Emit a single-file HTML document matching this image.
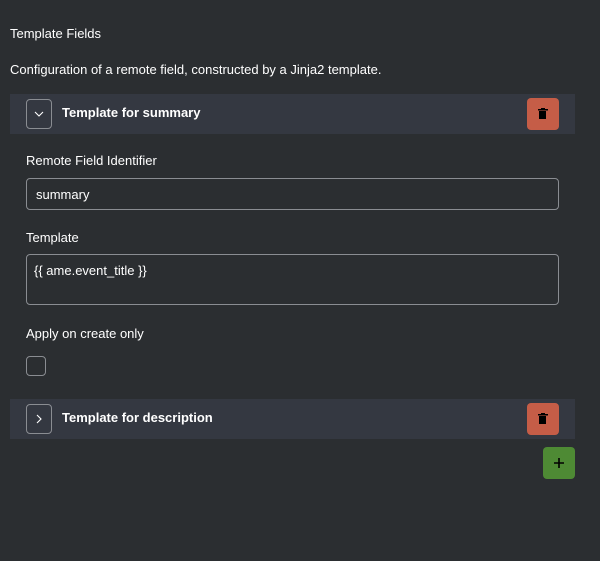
<!DOCTYPE html><html><head><style>
body{margin:0;width:600px;height:561px;background:#2b2e31;font-family:"Liberation Sans",sans-serif;color:#fff;font-size:13px;position:relative;overflow:hidden}
.a{position:absolute}
.band{position:absolute;left:10px;width:565px;height:40px;background:#343841}
.tog{position:absolute;left:16px;top:5px;width:26px;height:30px;border:1px solid #8a8d92;border-radius:4px;box-sizing:border-box}
.del{position:absolute;left:517px;top:4px;width:32px;height:32px;background:#c55d47;border-radius:4px}
.ttl{position:absolute;left:52px;top:11px;font-weight:bold;font-size:13px}
.inp{position:absolute;left:26px;width:533px;border:1px solid #8a8d92;border-radius:4px;box-sizing:border-box}
</style></head><body>
<div class="a" style="left:10px;top:26px">Template Fields</div>
<div class="a" style="left:10px;top:62px">Configuration of a remote field, constructed by a Jinja2 template.</div>
<div class="band" style="top:94px">
 <div class="tog"><svg width="24" height="28"><path d="M8 12l4 4 4-4" stroke="#fff" fill="none" stroke-width="1.1"/></svg></div>
 <div class="ttl">Template for summary</div>
 <div class="del"><svg width="32" height="32"><rect x="12" y="13" width="7" height="8" fill="#000"/><rect x="11" y="11" width="10" height="1.5" fill="#000"/><rect x="14" y="10" width="4" height="1.5" fill="#000"/></svg></div>
</div>
<div class="a" style="left:26px;top:153px">Remote Field Identifier</div>
<div class="inp" style="top:178px;height:32px"><span class="a" style="left:9px;top:8px">summary</span></div>
<div class="a" style="left:26px;top:230px">Template</div>
<div class="inp" style="top:254px;height:51px"><span class="a" style="left:7px;top:8px">{{ ame.event_title }}</span></div>
<div class="a" style="left:26px;top:326px">Apply on create only</div>
<div class="a" style="left:26px;top:356px;width:20px;height:20px;border:1px solid #8a8d92;border-radius:4px;box-sizing:border-box"></div>
<div class="band" style="top:399px">
 <div class="tog"><svg width="24" height="28"><path d="M10 10l4 4-4 4" stroke="#fff" fill="none" stroke-width="1.1"/></svg></div>
 <div class="ttl">Template for description</div>
 <div class="del"><svg width="32" height="32"><rect x="12" y="13" width="7" height="8" fill="#000"/><rect x="11" y="11" width="10" height="1.5" fill="#000"/><rect x="14" y="10" width="4" height="1.5" fill="#000"/></svg></div>
</div>
<div class="a" style="left:543px;top:447px;width:32px;height:32px;background:#4e8a34;border-radius:4px"><svg width="32" height="32"><path d="M11 16h10M16 11v10" stroke="#000" stroke-width="1.6"/></svg></div>
</body></html>
